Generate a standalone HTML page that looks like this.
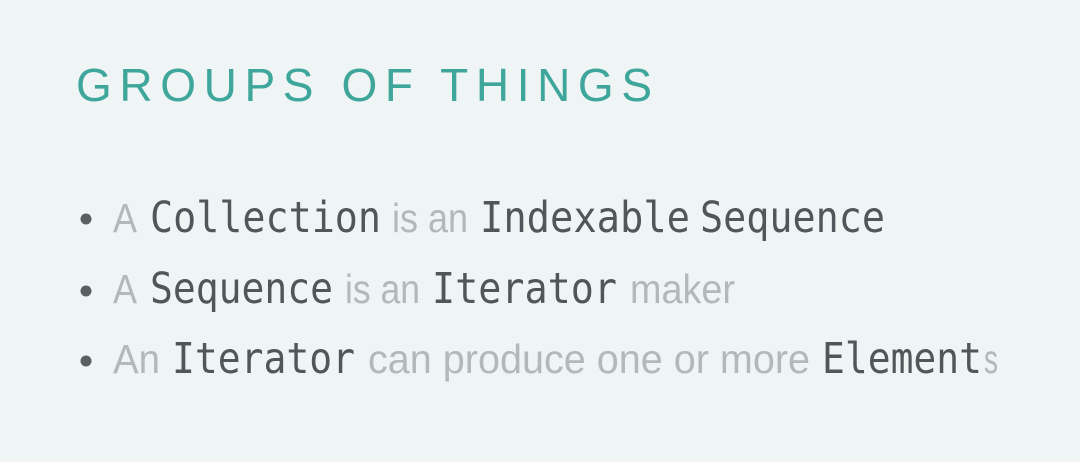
<!DOCTYPE html>
<html><head><meta charset="utf-8"><style>
html,body{margin:0;padding:0;background:#eff4f4;}
svg{display:block}
.t{font-family:"Liberation Sans",sans-serif;fill:#3ea69a;font-size:46px;}
.l{font-family:"Liberation Sans",sans-serif;fill:#b3b8b8;font-size:41px;}
.m{font-family:"DejaVu Sans Mono","Liberation Mono",monospace;fill:#50565a;font-size:43px;}
</style></head><body>
<svg width="1080" height="462" viewBox="0 0 1080 462">
<rect width="1080" height="462" fill="#eff4f4"/>
<text class="t" x="76" y="101" textLength="576" lengthAdjust="spacing">GROUPS OF THINGS</text>
<g fill="#5a5f60"><circle cx="86" cy="219" r="5.5"/><circle cx="86" cy="291" r="5.5"/><circle cx="86" cy="361" r="5.5"/></g>
<text class="l" x="113" y="232" textLength="24" lengthAdjust="spacingAndGlyphs">A</text>
<text class="m" x="150" y="232" textLength="231" lengthAdjust="spacingAndGlyphs">Collection</text>
<text class="l" x="392" y="232" textLength="76" lengthAdjust="spacingAndGlyphs">is an</text>
<text class="m" x="480" y="232" textLength="210" lengthAdjust="spacingAndGlyphs">Indexable</text>
<text class="m" x="700" y="232" textLength="185" lengthAdjust="spacingAndGlyphs">Sequence</text>

<text class="l" x="113" y="303" textLength="24" lengthAdjust="spacingAndGlyphs">A</text>
<text class="m" x="150" y="303" textLength="183" lengthAdjust="spacingAndGlyphs">Sequence</text>
<text class="l" x="345" y="303" textLength="75" lengthAdjust="spacingAndGlyphs">is an</text>
<text class="m" x="432" y="303" textLength="185" lengthAdjust="spacingAndGlyphs">Iterator</text>
<text class="l" x="630" y="303" textLength="105" lengthAdjust="spacingAndGlyphs">maker</text>

<text class="l" x="113" y="373" textLength="47" lengthAdjust="spacingAndGlyphs">An</text>
<text class="m" x="172" y="373" textLength="183" lengthAdjust="spacingAndGlyphs">Iterator</text>
<text class="l" x="368" y="373" textLength="442" lengthAdjust="spacingAndGlyphs">can produce one or more</text>
<text class="m" x="822" y="373" textLength="160" lengthAdjust="spacingAndGlyphs">Element</text>
<text class="l" x="984" y="373" textLength="14" lengthAdjust="spacingAndGlyphs">s</text>
</svg>
</body></html>
